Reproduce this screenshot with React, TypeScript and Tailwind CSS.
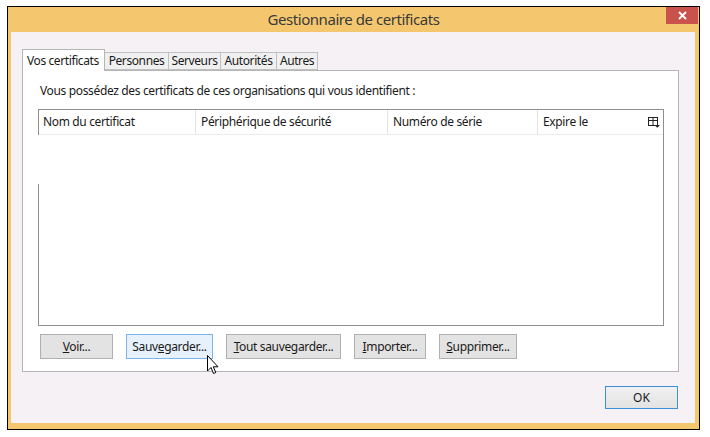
import React from "react";

const font = { fontFamily: '"Noto Sans", "Open Sans", sans-serif' };

function Btn({ children, className = "" }: { children: React.ReactNode; className?: string }) {
  return (
    <div
      className={
        "h-[25px] flex items-center justify-center border text-[12px] tracking-[-0.35px] whitespace-nowrap text-[#1a1a1a] " +
        className
      }
    >
      {children}
    </div>
  );
}

export default function App() {
  return (
    <div className="w-[710px] h-[437px] bg-white relative overflow-hidden" style={font}>
      <div className="ml-[7px] mt-[6px] w-[693px] h-[424px] border border-black flex flex-col">
        {/* title bar */}
        <div className="h-[25px] bg-[#f4c76f] relative flex items-center justify-center shrink-0">
          <span className="text-[15px] tracking-[-0.45px] text-[#3a3a3a] leading-none">Gestionnaire de certificats</span>
          <div className="absolute right-[1px] top-0 w-[32px] h-[17px] bg-[#c9524d] flex items-center justify-center">
            <svg width="9" height="9" viewBox="0 0 9 9">
              <path d="M1 1 L8 8 M8 1 L1 8" stroke="white" strokeWidth="1.8" />
            </svg>
          </div>
        </div>
        {/* body */}
        <div className="flex-1 bg-[#f5f1f5] border-l-[3px] border-r-[4px] border-b-[6px] border-[#f4c76f] pl-[11px] pr-[16px] pt-[17px] flex flex-col">
          {/* tabs */}
          <div className="flex items-end h-[21px] text-[12px] tracking-[-0.4px] whitespace-nowrap text-[#1a1a1a] relative z-10">
            <div className="h-[22px] -mb-px pl-[4px] w-[83px] bg-white border border-b-0 border-[#b5b5b5] flex items-center">
              Vos certificats
            </div>
            <div className="h-[18px] w-[64px] bg-[#f0f0f0] border border-l-0 border-[#c0c0c0] flex items-center justify-center">Personnes</div>
            <div className="h-[18px] w-[52px] bg-[#f0f0f0] border border-l-0 border-[#c0c0c0] flex items-center justify-center">Serveurs</div>
            <div className="h-[18px] w-[56px] bg-[#f0f0f0] border border-l-0 border-[#c0c0c0] flex items-center justify-center">Autorités</div>
            <div className="h-[18px] w-[41px] bg-[#f0f0f0] border border-l-0 border-[#c0c0c0] flex items-center justify-center">Autres</div>
          </div>
          {/* panel */}
          <div className="w-[657px] h-[302px] bg-white border border-[#b5b5b5] flex flex-col">
            <div className="pl-[17px] pt-[11px] text-[12px] tracking-[-0.35px] whitespace-nowrap text-[#1a1a1a] h-[38px]">
              Vous possédez des certificats de ces organisations qui vous identifient :
            </div>
            <div className="ml-[15px] w-[626px] h-[217px] border-t border-r border-b border-[#8f8f8f] flex">
              <div className="w-px flex flex-col">
                <div className="h-[25px] bg-[#8f8f8f]" />
                <div className="h-[49px]" />
                <div className="flex-1 bg-[#8f8f8f]" />
              </div>
              <div className="flex-1 flex flex-col">
                <div className="h-[25px] flex text-[12px] tracking-[-0.35px] whitespace-nowrap text-[#1a1a1a] border-b border-[#ececec]">
                  <div className="w-[157px] pl-[4px] flex items-center border-r border-[#e3e3e3]">Nom du certificat</div>
                  <div className="w-[192px] pl-[5px] flex items-center border-r border-[#e3e3e3]">Périphérique de sécurité</div>
                  <div className="w-[150px] pl-[5px] flex items-center border-r border-[#e3e3e3]">Numéro de série</div>
                  <div className="w-[107px] pl-[5px] flex items-center">Expire le</div>
                  <div className="flex-1 flex items-center justify-center">
                    <svg width="12" height="11" viewBox="0 0 12 11">
                      <rect x="0.5" y="0.5" width="9" height="8" fill="none" stroke="#222" />
                      <path d="M0.5 3.5 H9.5 M5 0.5 V8.5" stroke="#222" />
                      <path d="M6.5 8 H12 L9.25 10.75 Z" fill="#222" />
                    </svg>
                  </div>
                </div>
              </div>
            </div>
            <div className="flex pl-[17px] pt-[8px] gap-[13px]">
              <Btn className="w-[73px] bg-[#e3e3e3] border-[#b0b0b0]">
                <span><u>V</u>oir...</span>
              </Btn>
              <Btn className="w-[87px] bg-[#e6f1fb] border-[#7eb4ea]">
                <span>Sauv<u>e</u>garder...</span>
              </Btn>
              <Btn className="w-[115px] bg-[#e3e3e3] border-[#b0b0b0]">
                <span><u>T</u>out sauvegarder...</span>
              </Btn>
              <Btn className="w-[72px] bg-[#e3e3e3] border-[#b0b0b0]">
                <span><u>I</u>mporter...</span>
              </Btn>
              <Btn className="w-[78px] bg-[#e3e3e3] border-[#b0b0b0]">
                <span><u>S</u>upprimer...</span>
              </Btn>
            </div>
          </div>
          <div className="flex justify-end pt-[14px] pr-[1px]">
            <div className="w-[73px] h-[23px] border border-[#3c8fd8] bg-gradient-to-b from-[#f0f0f0] to-[#e3e3e3] flex items-center justify-center text-[12px] text-[#1a1a1a]">
              OK
            </div>
          </div>
        </div>
      </div>
      {/* cursor */}
      <svg className="absolute left-[207px] top-[355px]" width="13" height="20" viewBox="0 0 13 20">
        <path
          d="M0.5 0.5 L0.5 16 L4 12.5 L6.5 18.5 L8.8 17.5 L6.3 11.8 L11 11.8 Z"
          fill="white"
          stroke="black"
          strokeWidth="1"
          strokeLinejoin="miter"
        />
      </svg>
    </div>
  );
}
